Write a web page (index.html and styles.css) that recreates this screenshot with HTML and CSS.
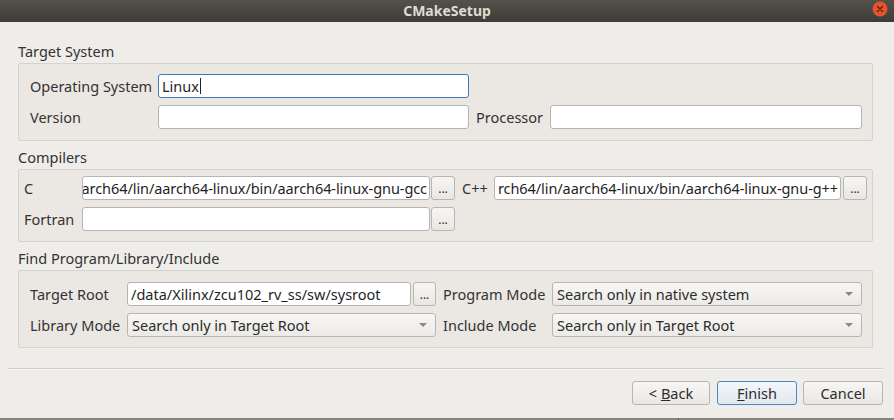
FILE: index.html
```html
<!DOCTYPE html>
<html>
<head>
<meta charset="utf-8">
<link rel="stylesheet" href="styles.css">
</head>
<body>
<div class="window">
  <div class="titlebar">
    <span class="title">CMakeSetup</span>
    <span class="close">
      <svg width="16" height="16" viewBox="0 0 16 16"><circle cx="8" cy="8" r="7.5" fill="#e9532a"/><path d="M5.5 5.5 L10.5 10.5 M10.5 5.5 L5.5 10.5" stroke="#4a2314" stroke-width="1.3" stroke-linecap="round"/></svg>
    </span>
  </div>
  <div class="content">
    <div class="group-title first">Target System</div>
    <div class="group grid-ts">
      <div class="label">Operating System</div>
      <div class="field focus"><span class="ftext">Linux</span><span class="caret"></span></div>
      <div></div><div></div>
      <div class="label">Version</div>
      <div class="field"></div>
      <div class="label">Processor</div>
      <div class="field"></div>
    </div>

    <div class="group-title">Compilers</div>
    <div class="group grid-cc">
      <div class="label">C</div>
      <div class="field clip"><span class="ftext">arch64/lin/aarch64-linux/bin/aarch64-linux-gnu-gcc</span></div>
      <div class="btncell l1"><div class="btn small">...</div></div>
      <div class="label pl">C++</div>
      <div class="field clip"><span class="ftext">rch64/lin/aarch64-linux/bin/aarch64-linux-gnu-g++</span></div>
      <div class="btncell l2"><div class="btn small">...</div></div>
      <div class="label">Fortran</div>
      <div class="field"></div>
      <div class="btncell l1"><div class="btn small">...</div></div>
    </div>

    <div class="group-title">Find Program/Library/Include</div>
    <div class="group grid-fp">
      <div class="label">Target Root</div>
      <div class="field"><span class="ftext">/data/Xilinx/zcu102_rv_ss/sw/sysroot</span></div>
      <div class="btncell l2"><div class="btn small">...</div></div>
      <div class="label pl">Program Mode</div>
      <div class="combo"><span>Search only in native system</span><span class="arrow"></span></div>
      <div class="label">Library Mode</div>
      <div class="combo span2"><span>Search only in Target Root</span><span class="arrow"></span></div>
      <div class="label pl">Include Mode</div>
      <div class="combo"><span>Search only in Target Root</span><span class="arrow"></span></div>
    </div>
  </div>
  <div class="separator"></div>
  <div class="buttons">
    <div class="btn b-back"><span>&lt; <u>B</u>ack</span></div>
    <div class="btn b-finish default"><span><u>F</u>inish</span></div>
    <div class="btn b-cancel"><span>Cancel</span></div>
  </div>
</div>
<div class="bottomstrip"><div class="seg"></div></div>
</body>
</html>
```

FILE: styles.css
```css
html, body {
  margin: 0;
  padding: 0;
}
body {
  width: 894px;
  height: 420px;
  background: #efede9;
  font-family: "Noto Sans", "Open Sans", sans-serif;
  font-size: 14.5px;
  color: #333333;
  overflow: hidden;
}
.window {
  height: 418px;
  display: flex;
  flex-direction: column;
}
.titlebar {
  height: 22px;
  background: linear-gradient(#54514b, #3d3c38);
  display: flex;
  align-items: center;
  justify-content: center;
  position: relative;
}
.title {
  color: #dfdbd2;
  font-weight: bold;
  font-size: 14px;
  line-height: 22px;
}
.close {
  position: absolute;
  right: 6px;
  top: 1px;
  width: 16px;
  height: 16px;
}
.content {
  padding: 20px 21px 0 18px;
}
.group-title {
  height: 18px;
  line-height: 18px;
  margin-top: 7px;
  margin-bottom: 3px;
}
.group-title.first {
  margin-top: 0;
}
.group {
  border: 1px solid #d6d3ce;
  border-radius: 2px;
  background: #ebe8e4;
  display: grid;
  row-gap: 7px;
  grid-auto-rows: 24px;
  align-items: stretch;
}
.grid-ts {
  padding: 10px 10px 11px 11px;
  grid-template-columns: 121px 311px 67px 312px;
  column-gap: 7px;
}
.grid-cc {
  padding: 6px 5px 10px 5px;
  grid-template-columns: 58px 348px 26px 38px 347px 26px;
}
.grid-fp {
  padding: 11px 10px 10px 11px;
  grid-template-columns: 97px 284px 25px 116px 310px;
}
.label {
  display: flex;
  align-items: center;
  white-space: nowrap;
}
.label.pl {
  padding-left: 6px;
}
.grid-fp .label.pl {
  padding-left: 7px;
}
.field {
  background: #ffffff;
  border: 1px solid #b7b4af;
  border-radius: 3px;
  display: flex;
  align-items: center;
  padding: 0 3px 0 3px;
  overflow: hidden;
  white-space: nowrap;
  box-sizing: border-box;
  color: #1f1f1f;
}
.field.focus {
  border-color: #3e7bb6;
}
.field.clip {
  justify-content: flex-end;
  padding: 0 2px 0 0;
  letter-spacing: -0.08px;
}
.caret {
  display: inline-block;
  width: 1px;
  height: 16px;
  background: #222;
  margin-left: 1px;
}
.btncell {
  display: flex;
}
.btncell.l1 .btn { margin-left: 1px; }
.btncell.l2 .btn { margin-left: 2px; }
.btn {
  box-sizing: border-box;
  border: 1px solid #b9b6b1;
  border-radius: 3px;
  background: linear-gradient(#f7f6f5, #e9e7e3);
  display: flex;
  align-items: center;
  justify-content: center;
  color: #2c2c2c;
  white-space: pre;
}
.btn.small {
  width: 24px;
  height: 24px;
  font-size: 12px;
}
.grid-fp .btn.small {
  width: 23px;
}
.combo {
  box-sizing: border-box;
  border: 1px solid #b9b6b1;
  border-radius: 3px;
  background: linear-gradient(#f8f7f6, #eceae6);
  display: flex;
  align-items: center;
  justify-content: space-between;
  padding: 0 8px 0 4px;
  white-space: nowrap;
  color: #2c2c2c;
}
.combo.span2 {
  grid-column: span 2;
}
.arrow {
  width: 0;
  height: 0;
  border-left: 4px solid transparent;
  border-right: 4px solid transparent;
  border-top: 4px solid #8a8883;
}
.separator {
  margin: 20px 11px 0 8px;
  height: 1px;
  background: #cfccc7;
  border-bottom: 1px solid #f9f8f6;
}
.buttons {
  display: flex;
  justify-content: flex-end;
  padding: 11px 11px 0 0;
}
.buttons .btn {
  height: 24px;
  font-size: 14.5px;
}
.b-back { width: 78px; margin-right: 7px; }
.b-finish { width: 80px; margin-right: 6px; }
.b-cancel { width: 80px; }
.btn.default {
  border-color: #4f86bd;
  background: linear-gradient(#f4f7fa, #dfe7ef);
}
.bottomstrip {
  height: 2px;
  background: #85837e;
  position: relative;
}
.bottomstrip .seg {
  position: absolute;
  left: 678px;
  top: 0;
  width: 1px;
  height: 2px;
  background: #5c5a56;
}
```
